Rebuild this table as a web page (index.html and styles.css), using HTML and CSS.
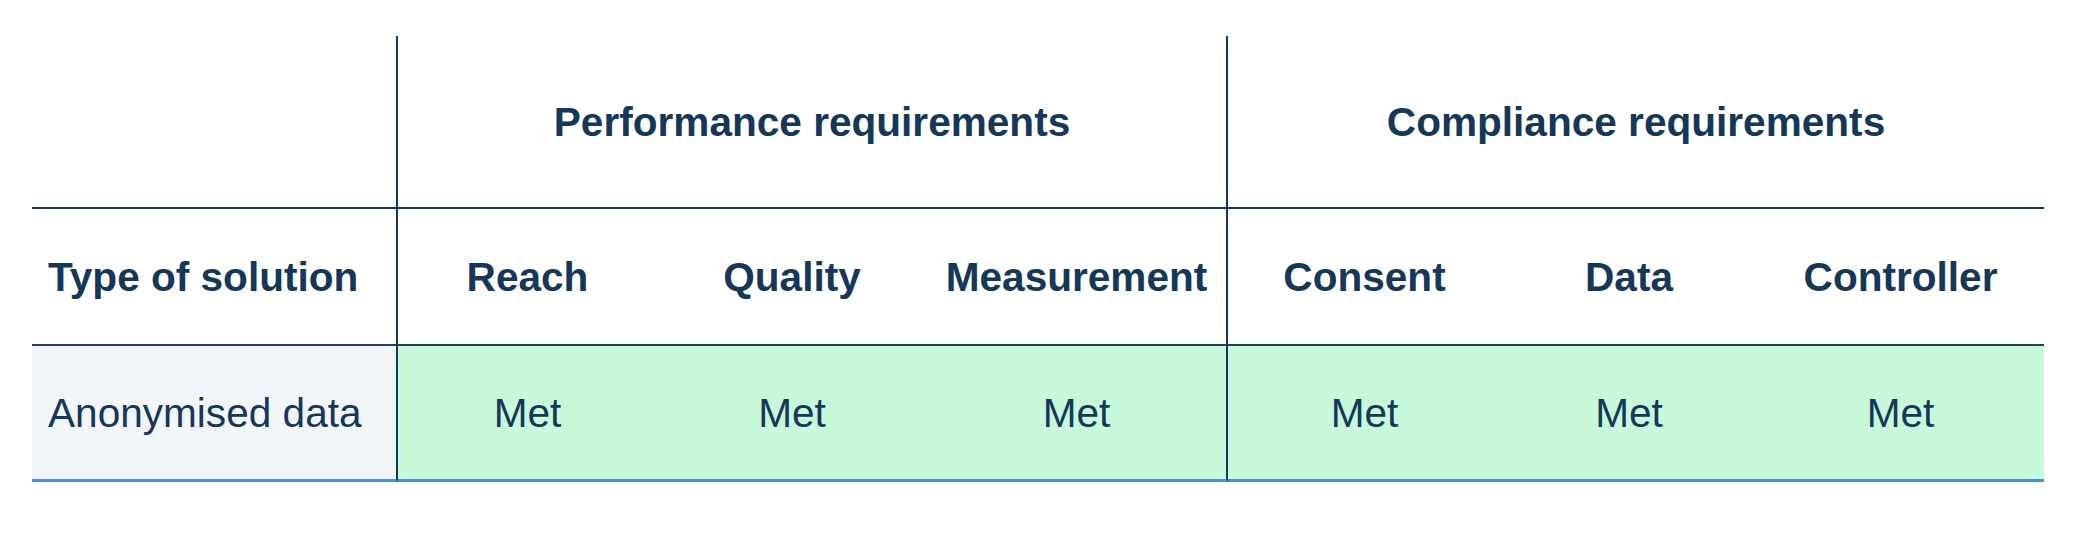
FILE: index.html
```html
<!DOCTYPE html>
<html lang="en">
<head>
<meta charset="utf-8">
<title>Requirements table</title>
<link rel="stylesheet" href="styles.css">
</head>
<body>
<div class="wrap">
  <table class="req">
    <colgroup>
      <col class="c-type">
      <col class="c-reach">
      <col class="c-quality">
      <col class="c-measure">
      <col class="c-consent">
      <col class="c-data">
      <col class="c-controller">
    </colgroup>
    <thead>
      <tr class="row-group">
        <th class="corner sep"></th>
        <th colspan="3" class="sep">Performance requirements</th>
        <th colspan="3">Compliance requirements</th>
      </tr>
      <tr class="row-head">
        <th class="label sep">Type of solution</th>
        <th>Reach</th>
        <th>Quality</th>
        <th class="sep">Measurement</th>
        <th>Consent</th>
        <th>Data</th>
        <th>Controller</th>
      </tr>
    </thead>
    <tbody>
      <tr class="row-data">
        <td class="label name sep">Anonymised data</td>
        <td class="met">Met</td>
        <td class="met">Met</td>
        <td class="met sep">Met</td>
        <td class="met">Met</td>
        <td class="met">Met</td>
        <td class="met">Met</td>
      </tr>
    </tbody>
  </table>
</div>
</body>
</html>
```

FILE: styles.css
```css
html, body {
  margin: 0;
  padding: 0;
  background: #ffffff;
}

.wrap {
  padding: 36px 36px 0 32px;
}

.req {
  table-layout: fixed;
  width: 2012px;
  border-collapse: separate;
  border-spacing: 0;
  font-family: "Liberation Sans", Arial, Helvetica, sans-serif;
  font-size: 40.6px;
  line-height: 46px;
  color: #15375a;
}

.c-type { width: 366px; }
.c-reach { width: 259px; }
.c-quality { width: 270px; }
.c-measure { width: 301px; }
.c-consent { width: 273px; }
.c-data { width: 256px; }
.c-controller { width: 287px; }

.req th,
.req td {
  padding: 0;
  text-align: center;
  vertical-align: middle;
  box-sizing: border-box;
}

.req th {
  font-weight: 700;
}

.req td {
  font-weight: 400;
}

.req .sep {
  border-right: 2px solid #17375a;
}

.row-group th {
  height: 173px;
  border-bottom: 2px solid #17375a;
}

.row-head th {
  height: 137px;
  border-bottom: 2px solid #1f3f5c;
}

.row-data td {
  height: 136px;
  border-bottom: 3px solid #4a90d9;
}

.req .label {
  text-align: left;
  padding-left: 16px;
}

.name {
  background: #f2f6fb;
}

.met {
  background: #c8f9da;
}
```
